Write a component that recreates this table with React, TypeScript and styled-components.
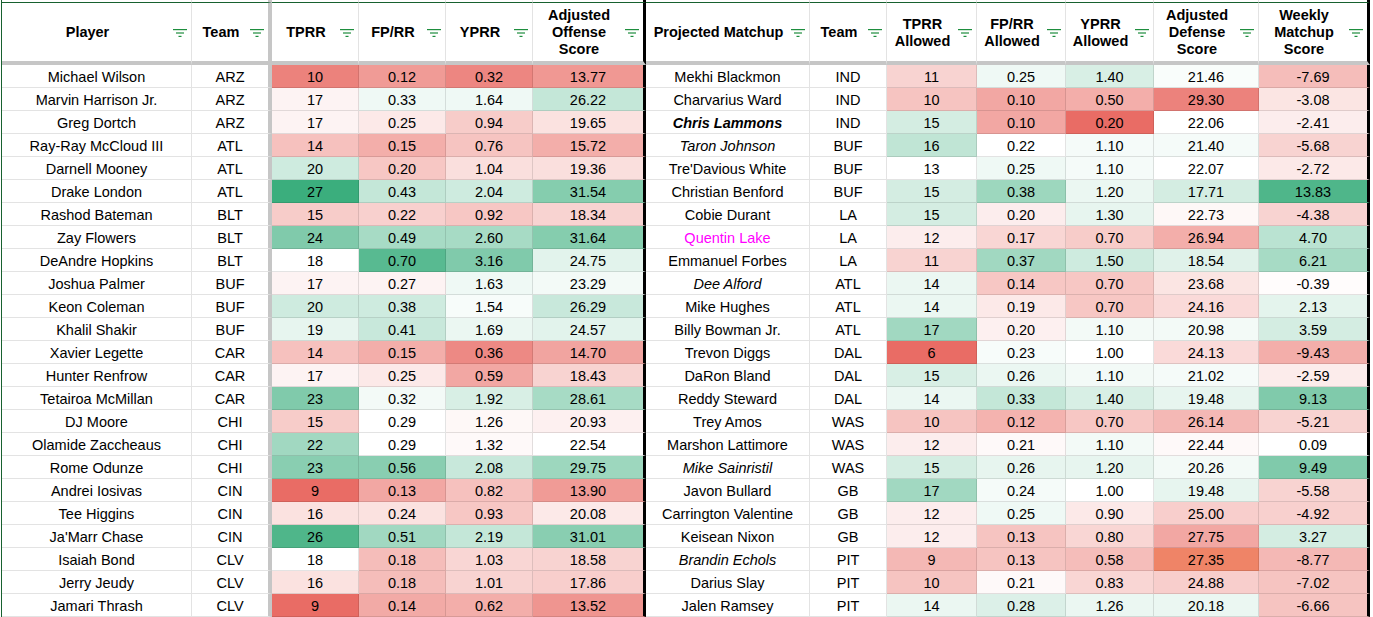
import React from "react";
import styled, { createGlobalStyle, css } from "styled-components";

const GlobalStyle = createGlobalStyle`
  html, body {
    margin: 0;
    padding: 0;
    background: #fff;
  }
  body {
    font-family: "Liberation Sans", Arial, sans-serif;
    color: #000;
  }
`;

// column widths, border included
const COLS = "190px 80px 87px 87px 87px 113px 164px 77px 90px 89px 88px 105px 111px";
const GRID = "rgba(0, 0, 0, 0.11)";

type Divider = "frozen" | "section" | undefined;

const Frame = styled.div`
  margin-left: 1px;
  border-left: 1px solid #17612f;
  width: max-content;
`;

const Table = styled.div`
  display: grid;
  grid-template-columns: ${COLS};
  grid-template-rows: 2px 63px;
  grid-auto-rows: 23px;
`;

const dividerCss = css<{ $divider?: Divider }>`
  border-right: 1px solid ${GRID};
  ${({ $divider }) =>
    $divider === "frozen" &&
    css`
      border-right: 4px solid #c6c6c6;
    `}
  ${({ $divider }) =>
    $divider === "section" &&
    css`
      border-right: 3px solid #000;
    `}
`;

const StubCell = styled.div<{ $divider?: Divider }>`
  box-sizing: border-box;
  ${dividerCss}
`;

const HeaderCell = styled.div<{ $divider?: Divider }>`
  box-sizing: border-box;
  display: flex;
  align-items: center;
  padding-top: 1px;
  border-top: 1px solid #17612f;
  border-bottom: 4px solid #c6c6c6;
  ${dividerCss}
  background: #fff;
`;

const HeaderLabel = styled.span`
  flex: 1;
  text-align: center;
  font-size: 14.5px;
  font-weight: 700;
  line-height: 17px;
  white-space: pre-line;
  padding-left: 2px;
`;

const FilterIcon = styled.svg`
  flex: none;
  width: 14px;
  height: 8px;
  margin: 0 4px 0 2px;
`;

const Cell = styled.div<{ $divider?: Divider; $bg?: string }>`
  box-sizing: border-box;
  display: flex;
  align-items: center;
  justify-content: center;
  padding-top: 2px;
  font-size: 14.5px;
  line-height: 1;
  white-space: nowrap;
  border-bottom: 1px solid ${GRID};
  ${dividerCss}
  background: ${({ $bg }) => $bg ?? "#fff"};
`;

const NameText = styled.span<{ $look?: Look }>`
  ${({ $look }) =>
    $look === "bi" &&
    css`
      font-weight: 700;
      font-style: italic;
    `}
  ${({ $look }) =>
    $look === "i" &&
    css`
      font-style: italic;
    `}
  ${({ $look }) =>
    $look === "pink" &&
    css`
      color: #ff00ff;
    `}
`;

type Look = "bi" | "i" | "pink" | undefined;
type Shade = number | string;

interface Row {
  player: string;
  team: string;
  off: string[];
  offShade: Shade[];
  matchup: string;
  mTeam: string;
  def: string[];
  defShade: Shade[];
  look?: Look;
}

const RED = [233, 108, 101];
const GREEN = [59, 174, 125];

// conditional-format colour scale: -1 red, 0 white, 1 green
const shade = (v: Shade) => {
  if (typeof v === "string") return v;
  if (v === 0) return "#fff";
  const base = v < 0 ? RED : GREEN;
  const t = Math.min(1, Math.abs(v));
  const [r, g, b] = base.map((c) => Math.round(255 + (c - 255) * t));
  return `rgb(${r}, ${g}, ${b})`;
};

const r = (
  player: string,
  team: string,
  off: string,
  offShade: Shade[],
  matchup: string,
  mTeam: string,
  def: string,
  defShade: Shade[],
  look?: Look
): Row => ({
  player,
  team,
  off: off.split(" "),
  offShade,
  matchup,
  mTeam,
  def: def.split(" "),
  defShade,
  look,
});

const rows: Row[] = [
  r("Michael Wilson", "ARZ", "10 0.12 0.32 13.77", [-0.85, -0.68, -0.82, -0.7], "Mekhi Blackmon", "IND", "11 0.25 1.40 21.46 -7.69", [-0.3, 0.08, 0.2, 0.03, -0.45]),
  r("Marvin Harrison Jr.", "ARZ", "17 0.33 1.64 26.22", [-0.08, 0.08, 0.08, 0.3], "Charvarius Ward", "IND", "10 0.10 0.50 29.30 -3.08", [-0.4, -0.6, -0.55, -0.85, -0.18]),
  r("Greg Dortch", "ARZ", "17 0.25 0.94 19.65", [-0.08, -0.15, -0.35, -0.2], "Chris Lammons", "IND", "15 0.10 0.20 22.06 -2.41", [0.22, -0.6, -1, 0, -0.12], "bi"),
  r("Ray-Ray McCloud III", "ATL", "14 0.15 0.76 15.72", [-0.42, -0.55, -0.4, -0.55], "Taron Johnson", "BUF", "16 0.22 1.10 21.40 -5.68", [0.32, 0, 0.05, 0.05, -0.3], "i"),
  r("Darnell Mooney", "ATL", "20 0.20 1.04 19.36", [0.25, -0.38, -0.22, -0.22], "Tre'Davious White", "BUF", "13 0.25 1.10 22.07 -2.72", [0, 0.08, 0.05, 0, -0.15]),
  r("Drake London", "ATL", "27 0.43 2.04 31.54", [1, 0.3, 0.25, 0.62], "Christian Benford", "BUF", "15 0.38 1.20 17.71 13.83", [0.22, 0.5, 0.1, 0.22, 0.9]),
  r("Rashod Bateman", "BLT", "15 0.22 0.92 18.34", [-0.35, -0.32, -0.38, -0.3], "Cobie Durant", "LA", "15 0.20 1.30 22.73 -4.38", [0.22, -0.12, 0.12, -0.05, -0.3]),
  r("Zay Flowers", "BLT", "24 0.49 2.60 31.64", [0.65, 0.45, 0.45, 0.62], "Quentin Lake", "LA", "12 0.17 0.70 26.94 4.70", [-0.12, -0.28, -0.35, -0.55, 0.35], "pink"),
  r("DeAndre Hopkins", "BLT", "18 0.70 3.16 24.75", [0, 0.85, 0.65, 0.15], "Emmanuel Forbes", "LA", "11 0.37 1.50 18.54 6.21", [-0.3, 0.48, 0.25, 0.16, 0.45]),
  r("Joshua Palmer", "BUF", "17 0.27 1.63 23.29", [-0.08, -0.08, 0.08, 0.06], "Dee Alford", "ATL", "14 0.14 0.70 23.68 -0.39", [0.1, -0.38, -0.38, -0.18, -0.02], "i"),
  r("Keon Coleman", "BUF", "20 0.38 1.54 26.29", [0.25, 0.25, 0.04, 0.28], "Mike Hughes", "ATL", "14 0.19 0.70 24.16 2.13", [0.1, -0.15, -0.38, -0.25, 0.14]),
  r("Khalil Shakir", "BUF", "19 0.41 1.69 24.57", [0.12, 0.28, 0.1, 0.15], "Billy Bowman Jr.", "ATL", "17 0.20 1.10 20.98 3.59", [0.48, -0.1, 0.06, 0.06, 0.22]),
  r("Xavier Legette", "CAR", "14 0.15 0.36 14.70", [-0.42, -0.55, -0.8, -0.62], "Trevon Diggs", "DAL", "6 0.23 1.00 24.13 -9.43", [-1, 0.04, 0, -0.25, -0.55]),
  r("Hunter Renfrow", "CAR", "17 0.25 0.59 18.43", [-0.08, -0.15, -0.6, -0.3], "DaRon Bland", "DAL", "15 0.26 1.10 21.02 -2.59", [0.2, 0.1, 0.06, 0.05, -0.13]),
  r("Tetairoa McMillan", "CAR", "23 0.32 1.92 28.61", [0.65, 0.06, 0.2, 0.45], "Reddy Steward", "DAL", "14 0.33 1.40 19.48 9.13", [0.1, 0.3, 0.2, 0.12, 0.65]),
  r("DJ Moore", "CHI", "15 0.29 1.26 20.93", [-0.35, 0, -0.05, -0.1], "Trey Amos", "WAS", "10 0.12 0.70 26.14 -5.21", [-0.4, -0.52, -0.38, -0.48, -0.3]),
  r("Olamide Zaccheaus", "CHI", "22 0.29 1.32 22.54", [0.48, 0, -0.04, 0], "Marshon Lattimore", "WAS", "12 0.21 1.10 22.44 0.09", [-0.12, -0.04, 0.06, -0.04, 0]),
  r("Rome Odunze", "CHI", "23 0.56 2.08 29.75", [0.6, 0.6, 0.28, 0.5], "Mike Sainristil", "WAS", "15 0.26 1.20 20.26 9.49", [0.22, 0.12, 0.12, 0.06, 0.65], "i"),
  r("Andrei Iosivas", "CIN", "9 0.13 0.82 13.90", [-1, -0.6, -0.42, -0.68], "Javon Bullard", "GB", "17 0.24 1.00 19.48 -5.58", [0.48, 0.05, 0, 0.12, -0.3]),
  r("Tee Higgins", "CIN", "16 0.24 0.93 20.08", [-0.2, -0.2, -0.38, -0.15], "Carrington Valentine", "GB", "12 0.25 0.90 25.00 -4.92", [-0.12, 0.08, -0.15, -0.33, -0.32]),
  r("Ja'Marr Chase", "CIN", "26 0.51 2.19 31.01", [0.9, 0.48, 0.3, 0.6], "Keisean Nixon", "GB", "12 0.13 0.80 27.75 3.27", [-0.12, -0.4, -0.28, -0.6, 0.22]),
  r("Isaiah Bond", "CLV", "18 0.18 1.03 18.58", [0, -0.45, -0.28, -0.3], "Brandin Echols", "PIT", "9 0.13 0.58 27.35 -8.77", [-0.48, -0.4, -0.45, "#ef8467", -0.48], "i"),
  r("Jerry Jeudy", "CLV", "16 0.18 1.01 17.86", [-0.2, -0.45, -0.3, -0.33], "Darius Slay", "PIT", "10 0.21 0.83 24.88 -7.02", [-0.4, -0.04, -0.28, -0.33, -0.4]),
  r("Jamari Thrash", "CLV", "9 0.14 0.62 13.52", [-1, -0.58, -0.55, -0.72], "Jalen Ramsey", "PIT", "14 0.28 1.26 20.18 -6.66", [0.1, 0.18, 0.1, 0.1, -0.4]),
];

const headers: { label: string; divider?: Divider }[] = [
  { label: "Player" },
  { label: "Team", divider: "frozen" },
  { label: "TPRR" },
  { label: "FP/RR" },
  { label: "YPRR" },
  { label: "Adjusted\nOffense\nScore", divider: "section" },
  { label: "Projected Matchup" },
  { label: "Team" },
  { label: "TPRR\nAllowed" },
  { label: "FP/RR\nAllowed" },
  { label: "YPRR\nAllowed" },
  { label: "Adjusted\nDefense\nScore" },
  { label: "Weekly\nMatchup\nScore", divider: "section" },
];

const Filter = () => (
  <FilterIcon viewBox="0 0 14 8">
    <rect x="0" y="0" width="14" height="1.2" fill="#1e8e3e" />
    <rect x="3" y="3.4" width="8" height="1.2" fill="#1e8e3e" />
    <rect x="5.5" y="6.8" width="3" height="1.2" fill="#1e8e3e" />
  </FilterIcon>
);

const App = () => {
  return (
    <>
      <GlobalStyle />
      <Frame>
        <Table>
          {headers.map((h, i) => (
            <StubCell key={`s${i}`} $divider={h.divider} />
          ))}
          {headers.map((h, i) => (
            <HeaderCell key={`h${i}`} $divider={h.divider}>
              <HeaderLabel>{h.label}</HeaderLabel>
              <Filter />
            </HeaderCell>
          ))}
          {rows.map((row, ri) => (
            <React.Fragment key={ri}>
              <Cell>{row.player}</Cell>
              <Cell $divider="frozen">{row.team}</Cell>
              {row.off.map((v, i) => (
                <Cell
                  key={`o${i}`}
                  $bg={shade(row.offShade[i])}
                  $divider={i === 3 ? "section" : undefined}
                >
                  {v}
                </Cell>
              ))}
              <Cell>
                <NameText $look={row.look}>{row.matchup}</NameText>
              </Cell>
              <Cell>{row.mTeam}</Cell>
              {row.def.map((v, i) => (
                <Cell
                  key={`d${i}`}
                  $bg={shade(row.defShade[i])}
                  $divider={i === 4 ? "section" : undefined}
                >
                  {v}
                </Cell>
              ))}
            </React.Fragment>
          ))}
        </Table>
      </Frame>
    </>
  );
};

export default App;
